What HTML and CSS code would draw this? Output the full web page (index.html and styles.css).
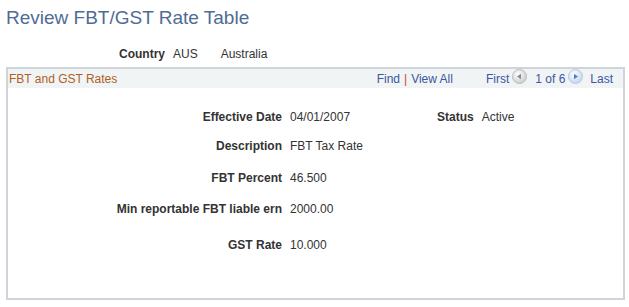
FILE: index.html
```html
<!DOCTYPE html>
<html>
<head>
<meta charset="utf-8">
<link rel="stylesheet" href="styles.css">
</head>
<body>
<div class="page">
  <h1 class="title">Review FBT/GST Rate Table</h1>
  <div class="country">
    <span class="lbl country-lbl">Country</span>
    <span class="val">AUS</span>
    <span class="val country-name">Australia</span>
  </div>
  <div class="box">
    <div class="box-head">
      <span class="box-title">FBT and GST Rates</span>
      <div class="nav">
        <a class="link">Find</a><span class="sep">|</span><a class="link">View All</a>
        <span class="first">First</span>
        <svg class="arrow" width="15" height="15" viewBox="0 0 15 15"><defs><radialGradient id="g1" cx="0.4" cy="0.35" r="0.7"><stop offset="0" stop-color="#ffffff"/><stop offset="1" stop-color="#c9c9c9"/></radialGradient></defs><circle cx="7.5" cy="7.5" r="7" fill="url(#g1)" stroke="#bdbdbd"/><path d="M5 7.5 L9 4.8 L9 10.2 Z" fill="#8a8a8a"/></svg>
        <span class="count">1 of 6</span>
        <svg class="arrow" width="15" height="15" viewBox="0 0 15 15"><defs><radialGradient id="g2" cx="0.4" cy="0.35" r="0.7"><stop offset="0" stop-color="#ffffff"/><stop offset="1" stop-color="#bcd3ee"/></radialGradient></defs><circle cx="7.5" cy="7.5" r="7" fill="url(#g2)" stroke="#b6cbe3"/><path d="M10 7.5 L6 4.8 L6 10.2 Z" fill="#4f7fc0"/></svg>
        <span class="last">Last</span>
      </div>
    </div>
    <div class="form">
      <div class="row r1">
        <span class="lbl">Effective Date</span><span class="val">04/01/2007</span>
        <span class="lbl status-lbl">Status</span><span class="val">Active</span>
      </div>
      <div class="row r2"><span class="lbl">Description</span><span class="val">FBT Tax Rate</span></div>
      <div class="row r3"><span class="lbl">FBT Percent</span><span class="val">46.500</span></div>
      <div class="row r4"><span class="lbl">Min reportable FBT liable ern</span><span class="val">2000.00</span></div>
      <div class="row r5"><span class="lbl">GST Rate</span><span class="val">10.000</span></div>
    </div>
  </div>
</div>
</body>
</html>
```
FILE: styles.css
```css
html, body { margin: 0; padding: 0; background: #ffffff; }
body { font-family: "Liberation Sans", Arial, sans-serif; font-size: 12px; color: #333333; }
.page { padding: 7px 5px 0 6px; }
.title { margin: 0; font-size: 19px; font-weight: normal; color: #4f6c94; line-height: 22px; }
.country { display: flex; align-items: center; height: 14px; margin-top: 18px; padding-left: 113px; }
.lbl { font-weight: bold; color: #333333; }
.val { color: #333333; }
.country-lbl { margin-right: 8px; }
.country-name { margin-left: 23px; }
.box { margin-top: 6px; border: 2px solid #cfd3da; height: 233px; box-sizing: border-box; width: 619px; }
.box-head { height: 19px; background: #f0f4f4; display: flex; align-items: center; justify-content: space-between; padding-left: 1px; }
.box-title { color: #b25e24; font-size: 12px; }
.nav { display: flex; align-items: center; padding-right: 10px; }
.link { color: #3b57a0; }
.sep { color: #c44a3a; margin: 0 4px; }
.first { color: #3b57a0; margin-left: 33px; }
.arrow { margin: -5px 8px 0 3px; }
.count { color: #3b57a0; }
.last { color: #3b57a0; margin-left: -1px; }
.row { display: grid; grid-template-columns: 274px 139px max-content max-content; justify-content: start; column-gap: 8px; align-items: center; height: 14px; }
.row .lbl { text-align: right; }
.r1 { margin-top: 22px; }
.r2 { margin-top: 15px; }
.r3 { margin-top: 18px; }
.r4 { margin-top: 17px; }
.r5 { margin-top: 22px; }
```
